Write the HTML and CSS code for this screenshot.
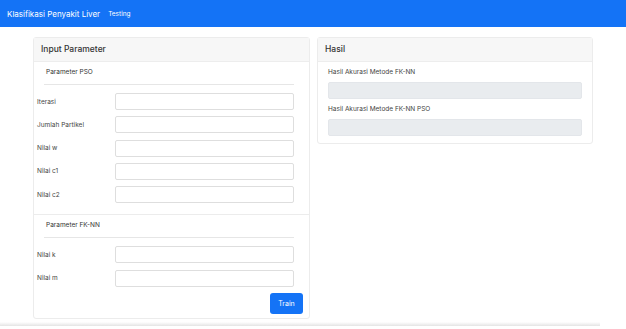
FILE: index.html
```html
<!DOCTYPE html>
<html>
	<head>
		<meta charset="utf-8" />
		<title>Klasifikasi Penyakit Liver</title>
		<link rel="stylesheet" href="styles.css">
	</head>

	<body>
		<nav class="navbar">
			<a class="brand" href="javascript:;">Klasifikasi Penyakit Liver</a>
			<a class="nav-link" href="javascript:;">Testing</a>
		</nav>

		<div class="container">
			<div class="card card-input">
				<div class="card-header">Input Parameter</div>
				<div class="section">
					<div class="section-title">Parameter PSO</div>
					<div class="form-row">
						<label>Iterasi</label>
						<input type="text">
					</div>
					<div class="form-row">
						<label>Jumlah Partikel</label>
						<input type="text">
					</div>
					<div class="form-row">
						<label>Nilai w</label>
						<input type="text">
					</div>
					<div class="form-row">
						<label>Nilai c1</label>
						<input type="text">
					</div>
					<div class="form-row">
						<label>Nilai c2</label>
						<input type="text">
					</div>
				</div>
				<div class="section section-split">
					<div class="section-title">Parameter FK-NN</div>
					<div class="form-row">
						<label>Nilai k</label>
						<input type="text">
					</div>
					<div class="form-row">
						<label>Nilai m</label>
						<input type="text">
					</div>
					<div class="actions">
						<button class="btn">Train</button>
					</div>
				</div>
			</div>

			<div class="card card-result">
				<div class="card-header">Hasil</div>
				<div class="result-body">
					<label>Hasil Akurasi Metode FK-NN</label>
					<input type="text" readonly>
					<label>Hasil Akurasi Metode FK-NN PSO</label>
					<input type="text" readonly>
				</div>
			</div>
		</div>

		<div class="bottom-shade"></div>
	</body>

</html>
```
FILE: styles.css
```css
body {
	margin: 0;
	padding: 0;
	font-family: "Inter", "Liberation Sans", sans-serif;
	color: #333;
	background: #fff;
	height: 329px;
	overflow: hidden;
}

a {
	text-decoration: none;
}

.navbar {
	height: 27px;
	background: #1473f6;
	display: flex;
	align-items: center;
	padding-left: 7px;
}

.brand {
	color: #fff;
	font-size: 8px;
	margin-right: 8px;
}

.nav-link {
	color: #fff;
	font-size: 6.5px;
}

.container {
	display: flex;
	align-items: flex-start;
	gap: 7px;
	padding: 10px 0 0 33px;
}

.card {
	border: 1px solid #ececec;
	border-radius: 3px;
	background: #fff;
}

.card-input {
	width: 275px;
	height: 280px;
	display: flex;
	flex-direction: column;
}

.card-result {
	width: 274px;
}

.card-header {
	height: 23px;
	line-height: 23px;
	padding-left: 7px;
	background: #f7f7f7;
	border-bottom: 1px solid #ededed;
	font-size: 8.5px;
	font-weight: 500;
	color: #333;
}

.section {
	padding: 0 15px 0 3px;
}

.section-split {
	border-top: 1px solid #ececec;
	margin-top: 5px;
	flex: 1;
}

.section-title {
	margin: 0 0 8px 7px;
	height: 22px;
	line-height: 21px;
	padding-left: 2px;
	border-bottom: 1px solid #e6e6e6;
	font-size: 6.5px;
	color: #333;
}

.form-row {
	display: flex;
	align-items: center;
	height: 17px;
	margin-bottom: 6.25px;
}

.form-row label {
	width: 78px;
	font-size: 6.5px;
	color: #444;
}

.form-row input {
	flex: 1;
	height: 17px;
	box-sizing: border-box;
	border: 1px solid #dedede;
	border-radius: 2px;
	background: #fff;
	margin: 0;
	padding: 0;
}

.actions {
	display: flex;
	justify-content: flex-end;
	margin: 2px -9px 0 0;
}

.btn {
	width: 33px;
	height: 21px;
	border: none;
	border-radius: 3px;
	background: #1473f6;
	color: #fff;
	font-family: "Inter", "Liberation Sans", sans-serif;
	font-size: 7px;
	padding: 0;
}

.result-body {
	padding: 6px 10px 7px 10px;
	display: flex;
	flex-direction: column;
}

.result-body label {
	font-size: 6.5px;
	color: #444;
	height: 9px;
	line-height: 9px;
	margin-bottom: 5px;
}

.result-body input {
	height: 17px;
	box-sizing: border-box;
	border: 1px solid #e3e6ea;
	border-radius: 2px;
	background: #e9ecef;
	margin: 0 0 6px 0;
	padding: 0;
}

.result-body input:last-child {
	margin-bottom: 0;
}

.bottom-shade {
	margin-top: 3px;
	height: 4px;
	background: linear-gradient(#fff, #e4e4e4);
	width: 600px;
}
```
